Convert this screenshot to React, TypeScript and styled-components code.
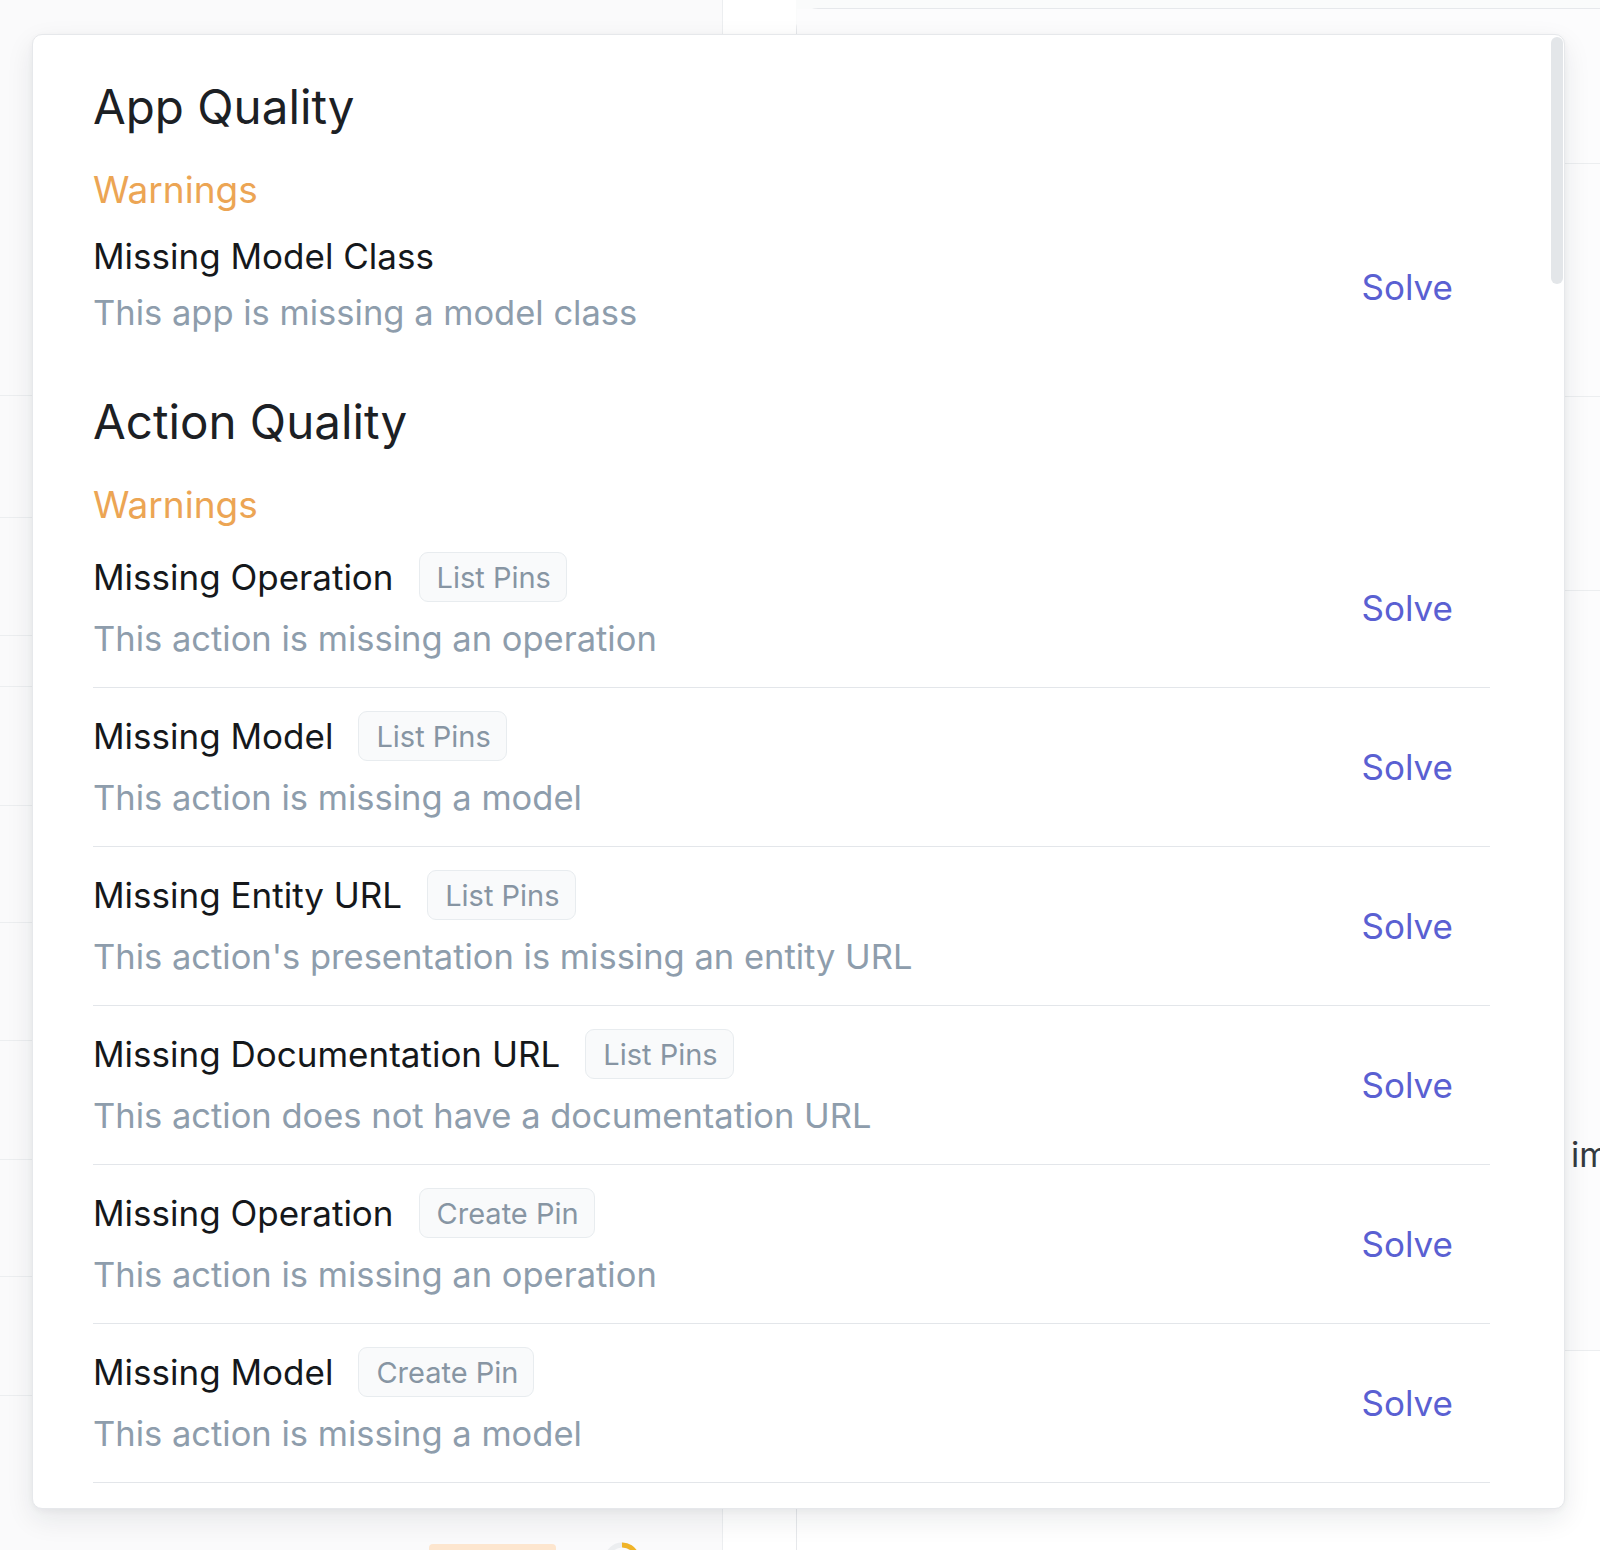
import React from 'react';
import styled, { createGlobalStyle } from 'styled-components';

const GlobalStyle = createGlobalStyle`
  html, body {
    margin: 0;
    padding: 0;
    background: #fafbfb;
  }
  body {
    font-family: Inter, "Noto Sans", sans-serif;
    -webkit-font-smoothing: antialiased;
  }
`;

type Issue = {
  title: string;
  tag?: string;
  text: string;
};

const appIssues: Issue[] = [
  { title: 'Missing Model Class', text: 'This app is missing a model class' },
];

const actionIssues: Issue[] = [
  { title: 'Missing Operation', tag: 'List Pins', text: 'This action is missing an operation' },
  { title: 'Missing Model', tag: 'List Pins', text: 'This action is missing a model' },
  { title: 'Missing Entity URL', tag: 'List Pins', text: "This action's presentation is missing an entity URL" },
  { title: 'Missing Documentation URL', tag: 'List Pins', text: 'This action does not have a documentation URL' },
  { title: 'Missing Operation', tag: 'Create Pin', text: 'This action is missing an operation' },
  { title: 'Missing Model', tag: 'Create Pin', text: 'This action is missing a model' },
];

const leftRows = [396, 122, 118, 51, 119, 117, 118, 119, 117, 119];

const IssueItem = ({ issue, divider }: { issue: Issue; divider: boolean }) => (
  <IssueRow $divider={divider}>
    <IssueBody>
      <TitleLine $tall={!!issue.tag}>
        <IssueTitle>{issue.title}</IssueTitle>
        {issue.tag && <Tag>{issue.tag}</Tag>}
      </TitleLine>
      <IssueText>{issue.text}</IssueText>
    </IssueBody>
    <SolveButton>Solve</SolveButton>
  </IssueRow>
);

const App = () => {
  return (
    <Page>
      <GlobalStyle />
      <Backdrop>
        <LeftPane>
          {leftRows.map((h, i) => (
            <ListRow key={i} $h={h} />
          ))}
          <ListFooter>
            <Pill />
            <Spinner width="40" height="40" viewBox="0 0 40 40">
              <circle cx="20" cy="20" r="15" fill="none" stroke="#eceef0" strokeWidth="5" />
              <path d="M20 5 A15 15 0 0 1 34 14" fill="none" stroke="#f0b429" strokeWidth="5" />
            </Spinner>
          </ListFooter>
        </LeftPane>
        <Gutter />
        <MainCard>
          <CardRow $h={155} />
          <CardRow $h={233} />
          <CardRow $h={194} />
          <CardRow $h={760}>
            <CardText>import</CardText>
          </CardRow>
        </MainCard>
      </Backdrop>

      <Popover>
        <Scroller>
          <SectionTitle>App Quality</SectionTitle>
          <GroupLabel>Warnings</GroupLabel>
          {appIssues.map((it, i) => (
            <IssueItem key={i} issue={it} divider={false} />
          ))}

          <SectionTitle $spaced>Action Quality</SectionTitle>
          <GroupLabel>Warnings</GroupLabel>
          {actionIssues.map((it, i) => (
            <IssueItem key={i} issue={it} divider />
          ))}
        </Scroller>
        <ScrollThumb />
      </Popover>
    </Page>
  );
};

const Page = styled.div`
  position: relative;
  width: 1600px;
  height: 1550px;
  overflow: hidden;
`;

const Backdrop = styled.div`
  display: flex;
  height: 100%;
`;

const LeftPane = styled.div`
  width: 722px;
  flex-shrink: 0;
  display: flex;
  flex-direction: column;
  background: #fafafb;
  border-right: 1px solid #eceef0;
`;

const ListRow = styled.div<{ $h: number }>`
  height: ${(p) => p.$h}px;
  flex-shrink: 0;
  border-bottom: 1px solid #eceef0;
  box-sizing: border-box;
`;

const ListFooter = styled.div`
  display: flex;
  align-items: flex-end;
  gap: 46px;
  padding-left: 429px;
  flex: 1;
`;

const Pill = styled.div`
  width: 127px;
  height: 6px;
  border-radius: 4px 4px 0 0;
  background: #fde6cf;
`;

const Spinner = styled.svg`
  margin-bottom: -30px;
`;

const Gutter = styled.div`
  width: 73px;
  flex-shrink: 0;
  background: #ffffff;
`;

const MainCard = styled.div`
  flex: 1;
  margin-top: 8px;
  background: #ffffff;
  border: 1px solid #e6e8eb;
  border-right: none;
  border-bottom: none;
  border-top-left-radius: 22px;
  display: flex;
  flex-direction: column;
`;

const CardRow = styled.div<{ $h: number }>`
  height: ${(p) => p.$h}px;
  flex-shrink: 0;
  box-sizing: border-box;
  border-bottom: 1px solid #eceef0;
  display: flex;
  align-items: flex-start;
  padding-left: 774px;
  background: #fcfcfd;
`;

const CardText = styled.span`
  font-size: 34px;
  line-height: 40px;
  color: #333a40;
  margin-top: 544px;
`;

const Popover = styled.div`
  position: absolute;
  left: 32px;
  top: 34px;
  width: 1533px;
  height: 1475px;
  box-sizing: border-box;
  background: #ffffff;
  border: 1px solid #e6e8eb;
  border-radius: 10px;
  box-shadow: 0 10px 28px rgba(20, 30, 40, 0.09), 0 2px 6px rgba(20, 30, 40, 0.04);
  overflow: hidden;
`;

const Scroller = styled.div`
  height: 100%;
  box-sizing: border-box;
  padding: 42px 74px 0 60px;
  overflow: hidden;
`;

const ScrollThumb = styled.div`
  position: absolute;
  top: 2px;
  right: 1px;
  width: 12px;
  height: 247px;
  border-radius: 6px;
  background: #e3e6e9;
`;

const SectionTitle = styled.h2<{ $spaced?: boolean }>`
  margin: ${(p) => (p.$spaced ? '30px' : '0')} 0 0;
  font-size: 47.5px;
  line-height: 60px;
  font-weight: 400;
  color: #1c2024;
`;

const GroupLabel = styled.div`
  margin-top: 29px;
  font-size: 37px;
  line-height: 48px;
  color: #eca554;
`;

const IssueRow = styled.div<{ $divider: boolean }>`
  display: flex;
  align-items: center;
  justify-content: space-between;
  padding: ${(p) => (p.$divider ? '23px 0 24px' : '22px 0 24px')};
  border-bottom: 1px solid ${(p) => (p.$divider ? '#e3e6ea' : 'transparent')};
`;

const IssueBody = styled.div`
  display: flex;
  flex-direction: column;
`;

const TitleLine = styled.div<{ $tall: boolean }>`
  display: flex;
  align-items: center;
  gap: 25px;
  height: ${(p) => (p.$tall ? 50 : 40)}px;
`;

const IssueTitle = styled.span`
  font-size: 35px;
  line-height: 40px;
  font-weight: 400;
  color: #15181b;
`;

const Tag = styled.span`
  display: inline-flex;
  align-items: center;
  height: 50px;
  box-sizing: border-box;
  padding: 0 15px 0 17px;
  border: 1px solid #e8ecef;
  border-radius: 9px;
  background: #f9fafb;
  font-size: 29px;
  color: #8795a3;
`;

const IssueText = styled.span`
  margin-top: 13px;
  font-size: 34.5px;
  line-height: 48px;
  color: #8e9dac;
`;

const SolveButton = styled.button`
  border: none;
  background: none;
  padding: 0 37px 0 0;
  font-family: inherit;
  font-size: 35px;
  color: #5a60d2;
  cursor: pointer;
`;

export default App;
